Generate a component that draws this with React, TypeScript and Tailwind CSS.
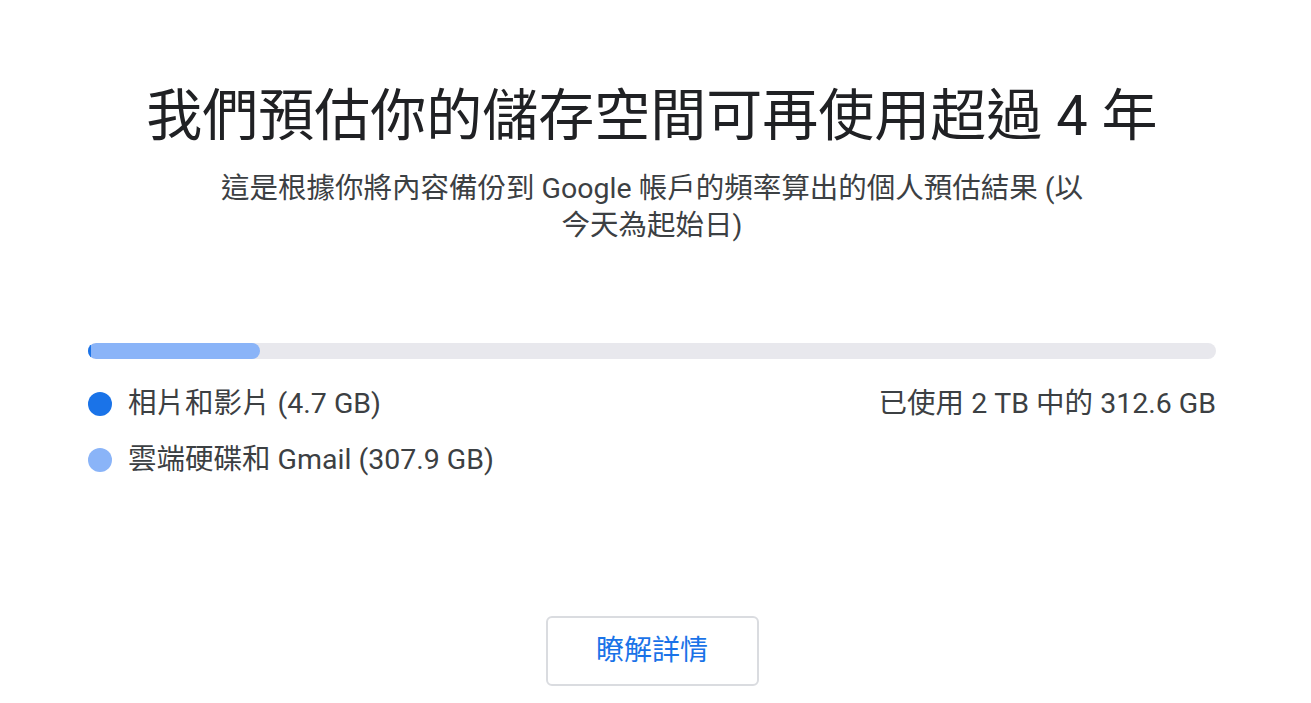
import React from 'react';

const usedGb = 312.6;
const totalGb = 2048;
const photosGb = 4.7;

export default function App() {
  const photosPct = (photosGb / totalGb) * 100;
  const usedPct = (usedGb / totalGb) * 100;

  return (
    <div
      className="min-h-screen bg-white pl-[88px] pr-[95px] pt-[84px] text-[#3c4043]"
      style={{ fontFamily: "Roboto, 'Noto Sans CJK TC', sans-serif" }}
    >
      <h1 className="text-center text-[56px] leading-[64px] font-normal text-[#202124]">
        我們預估你的儲存空間可再使用超過 4 年
      </h1>
      <p className="mx-auto mt-[22px] max-w-[880px] text-center text-[28.5px] leading-[37px]">
        這是根據你將內容備份到 Google 帳戶的頻率算出的個人預估結果 (以今天為起始日)
      </p>

      {/* Usage bar */}
      <div className="mt-[99px] relative h-4 w-full overflow-hidden rounded-full bg-[#e8e8ed]">
        <div className="absolute inset-y-0 left-0 rounded-full bg-[#8ab4f8]" style={{ width: `${usedPct}%` }} />
        <div className="absolute inset-y-0 left-0 bg-[#1a73e8]" style={{ width: `${photosPct}%` }} />
      </div>

      <div className="mt-[25px] flex items-start justify-between">
        <div className="flex flex-col gap-4">
          <div className="flex items-center gap-4 text-[28.5px] leading-10">
            <span className="h-6 w-6 rounded-full bg-[#1a73e8]" />
            <span>相片和影片 (4.7 GB)</span>
          </div>
          <div className="flex items-center gap-4 text-[28.5px] leading-10">
            <span className="h-6 w-6 rounded-full bg-[#8ab4f8]" />
            <span>雲端硬碟和 Gmail (307.9 GB)</span>
          </div>
        </div>
        <div className="text-[28.5px] leading-10">已使用 2 TB 中的 312.6 GB</div>
      </div>

      <div className="mt-[136px] flex justify-center">
        <button className="h-[70px] w-[213px] rounded-md border-2 border-[#dadce0] bg-white text-[28px] text-[#1a73e8]">
          瞭解詳情
        </button>
      </div>
    </div>
  );
}
